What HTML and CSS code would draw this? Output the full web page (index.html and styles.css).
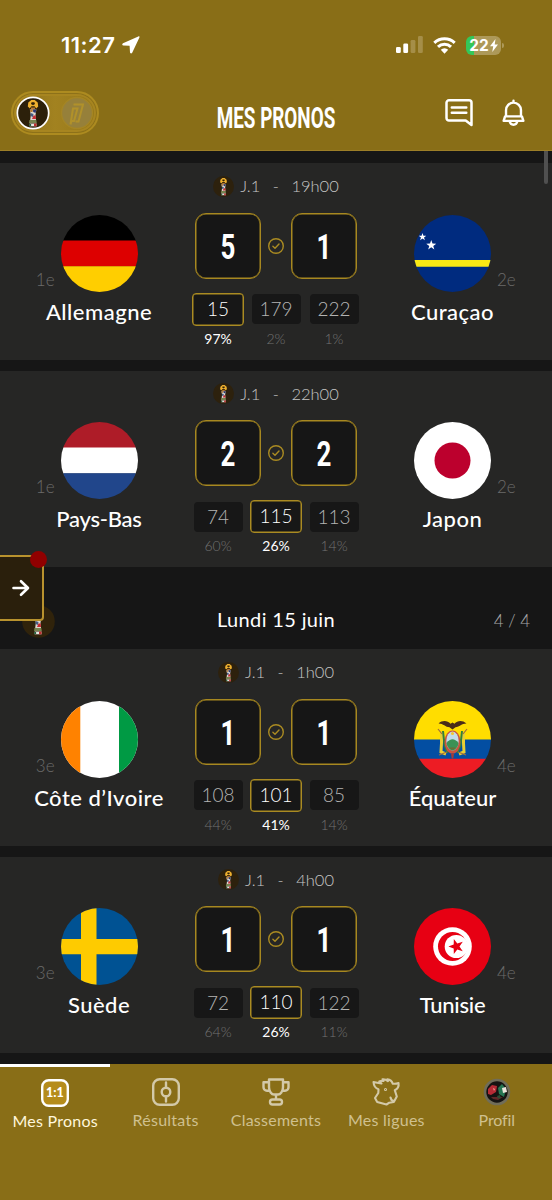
FILE: index.html
```html
<!DOCTYPE html>
<html lang="fr">
<head>
<meta charset="utf-8">
<title>Mes Pronos</title>
<link rel="stylesheet" href="styles.css">
</head>
<body>
<svg class="defs" aria-hidden="true">
  <symbol id="cup" viewBox="0 0 32 32">
    <path d="M14.300 3h3.400l3 2.600.5 4-2 1.800-1.600-2.200h-3.200l-1.600 2.200-2-1.800.5-4z" fill="#eeb02f"/>
    <path d="M14.600 5.200h2.800l.6 1.800-2 1.300-2-1.300z" fill="#30210a"/>
    <path d="M14 10.500h4v2h-4z" fill="#b97b35"/>
    <path d="M12.800 12.500h6.600l-.9 5.500.5 5h-5.800l.6-5z" fill="#dcd8d0"/>
    <path d="M13 12.500h3l-.5 2.500h-2.200z" fill="#b97b35"/>
    <path d="M16 12.500h3.200l-.5 3.500-2.500-1z" fill="#29366f"/>
    <path d="M13.700 16l2.800 1-.6 3-2.300-1z" fill="#455b83"/>
    <path d="M16.500 18.500h2.200l.3 3.500h-4z" fill="#c52b32"/>
    <path d="M12.500 23h6.800l.5 3h-7.800z" fill="#77834f"/>
    <path d="M12.600 26.500h7v2.800h-7z" fill="#e7e5e0"/>
    <path d="M17 26.500h2.600v2.800H17z" fill="#bd3030"/>
    <path d="M12.300 27h1.800v2h-1.800z" fill="#24633d"/>
  </symbol>
  <symbol id="ok" viewBox="0 0 16 16">
    <circle cx="8" cy="8" r="7.300" fill="none" stroke="#aa8b22" stroke-width="1.400"/>
    <path d="M4.900 8.300l2.100 2 4-4.300" fill="none" stroke="#aa8b22" stroke-width="1.400" stroke-linecap="round" stroke-linejoin="round"/>
  </symbol>
  <symbol id="star" viewBox="-10 -10 20 20">
    <path d="M0-10 2.350-3.240 9.510-3.090 3.800 1.240 5.880 8.090 0 4-5.880 8.090-3.800 1.240-9.510-3.090-2.350-3.240z"/>
  </symbol>
</svg>
<div class="phone">
  <header class="top">
    <div class="status">
      <div class="clock"><span class="time">11:27</span>
        <svg class="loc" viewBox="0 0 18 18"><path d="M16.300.4 1 7.300c-1.300.7-.9 2.100.4 2.200l6.200.3.400 6.500c.1 1.300 1.500 1.700 2.200.4L17.400 1.500c.4-.8-.3-1.500-1.100-1.100z" fill="#fff"/></svg>
      </div>
      <div class="signals">
        <svg class="bars" viewBox="0 0 27 18"><rect x="0" y="11" width="4.800" height="6" rx="1.300" fill="#fff"/><rect x="7.300" y="7.500" width="4.800" height="9.500" rx="1.300" fill="#fff"/><rect x="14.600" y="4" width="4.800" height="13" rx="1.300" fill="#a58e48"/><rect x="22" y="0" width="4.800" height="17" rx="1.300" fill="#a58e48"/></svg>
        <svg class="wifi" viewBox="0 0 23 17"><path d="M1.300 5.800a14.800 14.800 0 0 1 20.400 0M5 9.800a9.400 9.400 0 0 1 13 0" fill="none" stroke="#fff" stroke-width="3"/><path d="M11.500 16.700 7.800 12.800a5.300 5.300 0 0 1 7.400 0z" fill="#fff"/></svg>
        <div class="battery"><span>22</span><svg viewBox="0 0 8 13"><path d="M5.500 0 0 7.300h3.200L2.300 13 8 5.500H4.700z" fill="#fff"/></svg></div><i class="tip"></i>
      </div>
    </div>
    <div class="bar">
      <div class="switch">
        <svg class="sw-cup" viewBox="0 0 34 34"><circle cx="17" cy="17" r="15.700" fill="#2c200a" stroke="#fff" stroke-width="1.700"/><use href="#cup" x="1" y="1" width="32" height="32"/></svg>
        <svg class="sw-one" viewBox="0 0 34 34"><circle cx="17" cy="17" r="15.500" fill="#96803a" stroke="#a58523" stroke-width="1.300"/><path d="M13.500 8.500h9.500l-4.500 17h-3M10.500 28.500l1-3.500h2.500l3.500-12.500h-4.500z" fill="none" stroke="#b1912a" stroke-width="2"/></svg>
      </div>
      <h1>MES PRONOS</h1>
      <div class="actions">
        <svg class="chat" viewBox="0 0 28 28"><path d="M4 1.300h20a2.500 2.500 0 0 1 2.500 2.500V26l-5.800-4.500H4A2.500 2.500 0 0 1 1.500 19V3.800A2.500 2.500 0 0 1 4 1.300zM6.800 8.500h14.500M6.800 13.700h14.500" fill="none" stroke="#fff" stroke-width="2.500" stroke-linecap="round" stroke-linejoin="round"/></svg>
        <svg class="bell" viewBox="0 0 24 28"><path d="M12 1.200v2M4.200 17.500V11a7.800 7.800 0 0 1 15.600 0v6.500M3.200 17.500h17.600l1.500 4.700H1.700zM8 22.500c.4 2.500 1.900 3.800 4 3.800s3.600-1.300 4-3.800" fill="none" stroke="#fff" stroke-width="2.500" stroke-linecap="round" stroke-linejoin="round"/></svg>
      </div>
    </div>
  </header>

  <main class="feed">
    <i class="scroll"></i>
    <article class="match">
      <div class="team home"><div class="crest"><span class="rank">1e</span>
        <svg class="flag" viewBox="0 0 77 77"><path d="M0 0h77v26H0z" fill="#000"/><path d="M0 25.500h77v26H0z" fill="#dd0000"/><path d="M0 51.300h77V77H0z" fill="#ffce00"/></svg></div>
        <span class="name wide">Allemagne</span></div>
      <div class="centre">
        <div class="when"><svg><use href="#cup"/></svg><span>J.1</span><span class="dash">-</span><span>19h00</span></div>
        <div class="scores"><b><span>5</span></b><svg><use href="#ok"/></svg><b><span>1</span></b></div>
        <div class="odds"><div class="odd on"><em>15</em><small>97%</small></div><div class="odd"><em>179</em><small>2%</small></div><div class="odd"><em>222</em><small>1%</small></div></div>
      </div>
      <div class="team away"><div class="crest"><span class="rank">2e</span>
        <svg class="flag" viewBox="0 0 77 77"><path d="M0 0h77v77H0z" fill="#002b7f"/><path d="M0 45h77v6.700H0z" fill="#f9e814"/><g fill="#fff"><use href="#star" x="4.500" y="18" width="8" height="8"/><use href="#star" x="12" y="25" width="10.500" height="10.500"/></g></svg></div>
        <span class="name wide">Curaçao</span></div>
    </article>
    <article class="match">
      <div class="team home"><div class="crest"><span class="rank">1e</span>
        <svg class="flag" viewBox="0 0 77 77"><path d="M0 0h77v26H0z" fill="#ae1c28"/><path d="M0 25.500h77v26H0z" fill="#fff"/><path d="M0 51.300h77V77H0z" fill="#21468b"/></svg></div>
        <span class="name tight">Pays-Bas</span></div>
      <div class="centre">
        <div class="when"><svg><use href="#cup"/></svg><span>J.1</span><span class="dash">-</span><span>22h00</span></div>
        <div class="scores"><b><span>2</span></b><svg><use href="#ok"/></svg><b><span>2</span></b></div>
        <div class="odds"><div class="odd"><em>74</em><small>60%</small></div><div class="odd on"><em>115</em><small>26%</small></div><div class="odd"><em>113</em><small>14%</small></div></div>
      </div>
      <div class="team away"><div class="crest"><span class="rank">2e</span>
        <svg class="flag" viewBox="0 0 77 77"><path d="M0 0h77v77H0z" fill="#fff"/><circle cx="38.500" cy="38.500" r="18" fill="#bc002d"/></svg></div>
        <span class="name wide">Japon</span></div>
    </article>

    <section class="day">
      <svg class="day-cup" viewBox="0 0 33 33"><circle cx="16.500" cy="16.500" r="16.300" fill="#30230b"/><use href="#cup" x="0" y="0" width="32" height="32"/></svg>
      <h2>Lundi 15 juin</h2>
      <span class="count">4 / 4</span>
      <div class="drawer"><svg viewBox="0 0 18 18"><path d="M1.500 9h14M9 2.200 16 9l-7 6.800" fill="none" stroke="#fff" stroke-width="2.600" stroke-linecap="round" stroke-linejoin="round"/></svg><i></i></div>
    </section>

    <article class="match">
      <div class="team home"><div class="crest"><span class="rank">3e</span>
        <svg class="flag" viewBox="0 0 77 77"><path d="M0 0h77v77H0z" fill="#fff"/><path d="M0 0h19.300v77H0z" fill="#ff8200"/><path d="M58 0h19v77H58z" fill="#009a44"/></svg></div>
        <span class="name wide">Côte d’Ivoire</span></div>
      <div class="centre">
        <div class="when"><svg><use href="#cup"/></svg><span>J.1</span><span class="dash">-</span><span>1h00</span></div>
        <div class="scores"><b><span>1</span></b><svg><use href="#ok"/></svg><b><span>1</span></b></div>
        <div class="odds"><div class="odd"><em>108</em><small>44%</small></div><div class="odd on"><em>101</em><small>41%</small></div><div class="odd"><em>85</em><small>14%</small></div></div>
      </div>
      <div class="team away"><div class="crest"><span class="rank">4e</span>
        <svg class="flag" viewBox="0 0 77 77"><path d="M0 0h77v39H0z" fill="#ffdd00"/><path d="M0 38.500h77V58H0z" fill="#034ea2"/><path d="M0 57.700h77V77H0z" fill="#ed1c24"/>
          <path d="M27.500 31v11l-.5 9 5 2M49.500 31v11l.5 9-5 2" fill="none" stroke="#e9cf35" stroke-width="3"/>
          <path d="M29 30l1.500 14 3 8M48 30l-1.500 14-3 8" fill="none" stroke="#33803c" stroke-width="2"/>
          <path d="M24 28l4 5M53 28l-4 5M25 54l8-3M52 54l-8-3" stroke="#a06c3c" stroke-width="1.200"/>
          <path d="M24.500 22.500c4-3.500 9-3 12 .3l2-1.300 2 1.300c3-3.500 8-3.800 12-.3-4.500-.2-7 3.500-11 3.700L38.500 28.500l-3-2.300c-4 0-6.500-3.900-11-3.700z" fill="#4a2c18"/>
          <ellipse cx="38.500" cy="41" rx="8" ry="11.500" fill="#c9543f"/><ellipse cx="38.500" cy="40" rx="6.200" ry="9.500" fill="#c3dcea"/><path d="M32.500 42c4-5 8-5 12 0-.3 4-3 7-6 7.500-3-.5-5.500-3.500-6-7.500z" fill="#3b9155"/><path d="M35 46.500h7l-2 2h-3z" fill="#6b6d35"/><circle cx="38.500" cy="32.500" r="1.500" fill="#f4c430"/><path d="M37 52.500h3l-.7 5h-1.600z" fill="#a53b35"/></svg></div>
        <span class="name">Équateur</span></div>
    </article>
    <article class="match">
      <div class="team home"><div class="crest"><span class="rank">3e</span>
        <svg class="flag" viewBox="0 0 77 77"><path d="M0 0h77v77H0z" fill="#005293"/><path d="M20 0h15.500v77H20zM0 31h77v15.300H0z" fill="#fecb00"/></svg></div>
        <span class="name wide">Suède</span></div>
      <div class="centre">
        <div class="when"><svg><use href="#cup"/></svg><span>J.1</span><span class="dash">-</span><span>4h00</span></div>
        <div class="scores"><b><span>1</span></b><svg><use href="#ok"/></svg><b><span>1</span></b></div>
        <div class="odds"><div class="odd"><em>72</em><small>64%</small></div><div class="odd on"><em>110</em><small>26%</small></div><div class="odd"><em>122</em><small>11%</small></div></div>
      </div>
      <div class="team away"><div class="crest"><span class="rank">4e</span>
        <svg class="flag" viewBox="0 0 77 77"><path d="M0 0h77v77H0z" fill="#e70013"/><circle cx="38.500" cy="38.500" r="19.300" fill="#fff"/><circle cx="38.500" cy="38.500" r="14.500" fill="#e70013"/><circle cx="42.300" cy="38.500" r="11.600" fill="#fff"/><use href="#star" x="34.300" y="30.500" width="16" height="16" fill="#e70013" transform="rotate(-90 42.300 38.500)"/></svg></div>
        <span class="name tight">Tunisie</span></div>
    </article>
  </main>

  <nav class="tabs">
    <a class="tab active"><svg viewBox="0 0 28 28"><rect x="1.200" y="1.200" width="25.600" height="25.600" rx="6.500" fill="#b58c1b" stroke="#fff" stroke-width="2.400"/><text x="14" y="18.400" class="mini">1:1</text></svg><span>Mes Pronos</span></a>
    <a class="tab"><svg viewBox="0 0 28 28"><rect x="1.200" y="1.200" width="25.600" height="25.600" rx="6.500"/><circle cx="14" cy="14" r="4.300"/><path d="M14 4.500v5M14 18.500v5"/></svg><span>Résultats</span></a>
    <a class="tab"><svg viewBox="0 0 28 28"><path d="M7 1.500h14v7.700c0 4.200-2.700 7.300-5 7.300h-4c-2.300 0-5-3.100-5-7.300zM7 4.200H1.500v5c0 2 1.500 3.600 3.500 3.600h2.800M21 4.200h5.500v5c0 2-1.500 3.600-3.500 3.600h-2.800M14 16.500v5M10.500 21.500h7c1.500 0 2.500 1.200 2.500 2.500 0 1.500-1 2.500-2.500 2.500h-7c-1.500 0-2.500-1-2.500-2.500 0-1.300 1-2.500 2.500-2.500z"/></svg><span>Classements</span></a>
    <a class="tab"><svg class="cow" viewBox="0 0 28 28"><path d="M9.500 5.500C6 5 3.500 4.500 1.500 4c.3 3.800 1.500 6.300 5 7.200L6.300 15l-3.300 5 2.200 4 9.300 2.500 2.800-1.800 4.500-.7 3-5.500-2-6.300c2.700-1.200 4.200-4 3.700-7.200-1.800.7-4 1-5.800.6-.8-2.500-2.700-3.900-5.400-4.300l.7 1.800C14.300 1.700 12.500 1.100 10.500 1.300l1 1.700C10 2.700 8.500 2.900 7.300 3.500zM18.500 19.500l1 2.500 2 1"/><circle cx="13.500" cy="11.500" r=".5"/></svg><span>Mes ligues</span></a>
    <a class="tab last"><svg viewBox="0 0 28 28"><circle cx="14" cy="14" r="12" fill="#151312" stroke="#706d59" stroke-width="2.600"/><path class="pf" d="M5 11l4-4 5 1-1 6-5 3-3-1z" fill="#b52a35"/><path class="pf" d="M15 10l4-4 4 5-2 8-5-3z" fill="#267653"/><path class="pf" d="M19 10l4-1 1 5-4 1z" fill="#ece5dc"/><path class="pf" d="M10 10l2 1-1 2z" fill="#eba49c"/><path class="pf" d="M8 19h12l-5 3-5-1z" fill="#602627"/><path class="pf" d="M14 18l3-1 1 3-3 .5z" fill="#294e34"/></svg><span>Profil</span></a>
  </nav>
</div>
</body>
</html>
```
FILE: styles.css
```css
* { box-sizing: border-box; }
body { margin: 0; background: #161616; font-family: Lato, "Open Sans", sans-serif; color: #fff; }
.defs { position: absolute; width: 0; height: 0; }
svg { display: block; flex: none; overflow: visible; }
i, em { font-style: normal; }
.phone { width: 552px; height: 1200px; overflow: hidden; display: flex; flex-direction: column; background: #161616; }

.top { height: 151px; background: #896e17; border-bottom: 1px solid #9c7e27; flex: none; }
.status { height: 90px; padding: 35px 48px 0 61px; display: flex; justify-content: space-between; align-items: flex-start; }
.clock { display: flex; align-items: center; gap: 5px; height: 20px; }
.time { font: 600 22px/20px Inter, sans-serif; width: 56px; white-space: nowrap; letter-spacing: .45px; }
.loc { width: 18px; height: 18px; }
.signals { display: flex; align-items: center; height: 20px; }
.bars { width: 27px; height: 18px; margin-right: 10px; }
.wifi { width: 23px; height: 17px; margin-right: 10px; }
.battery { width: 35px; height: 19px; border-radius: 6px; background: linear-gradient(90deg, #34c759 8px, #ad9959 8px); display: flex; align-items: center; justify-content: center; gap: 1px; }
.battery span { font: 700 15.5px/19px Inter, sans-serif; }
.battery svg { width: 8px; height: 13px; }
.tip { width: 2px; height: 5px; margin-left: 1px; border-radius: 0 2px 2px 0; background: #ad9959; }
.bar { padding: 0 11px; display: grid; grid-template-columns: 1fr 118px 1fr; align-items: center; height: 46px; }
.switch { width: 88px; height: 44px; border-radius: 22px; border: 2px solid #ad8b20; box-shadow: inset 0 0 0 1px #8d7119, inset 0 0 0 3px #a78520; background: linear-gradient(90deg, #8c7018, #a28220 50%, #967819); display: flex; align-items: center; justify-content: space-between; padding: 0 3px; }
.switch svg { width: 34px; height: 34px; }
h1 { margin: 10px 0 0; font: 700 29px/28px Roboto, sans-serif; white-space: nowrap; display: flex; justify-content: center; transform: scaleX(.65); }
.actions { display: flex; justify-content: flex-end; align-items: center; gap: 29px; margin-right: 16px; }
.chat { width: 28px; height: 28px; }
.bell { width: 23px; height: 28px; }

.feed { height: 913px; padding-top: 12.400px; position: relative; flex: none; }
.scroll { position: absolute; right: 4px; top: 0; width: 4px; height: 33px; border-radius: 0 0 2px 2px; background: #505050; }
.match { height: 196.400px; margin-bottom: 11px; background: #262625; display: grid; grid-template-columns: 193px 166px 193px; }
.team { padding-top: 51.500px; display: flex; flex-direction: column; align-items: center; }
.home { padding-left: 5px; }
.away { padding-right: 6px; }
.crest { position: relative; }
.flag { width: 77px; height: 77px; border-radius: 50%; overflow: hidden; }
.rank { position: absolute; top: 54px; font-size: 17px; line-height: 22px; color: #6b6b6a; font-weight: 300; }
.home .rank { right: 83px; }
.away .rank { left: 83px; }
.name { font-size: 22px; line-height: 28px; margin-top: 6px; font-weight: 500; white-space: nowrap; }
.name.wide { letter-spacing: .5px; }
.name.tight { letter-spacing: -.25px; }
.centre { padding-top: 12px; }
.when { height: 22px; display: flex; align-items: center; justify-content: center; font-size: 16.500px; line-height: 22px; color: #c6c6c5; font-weight: 300; }
.when svg { width: 21px; height: 21px; border-radius: 50%; background: #2d210d; margin-right: 6px; }
.when .dash { margin: 0 12.500px; }
.scores { margin-top: 15.500px; padding: 0 2px; display: flex; align-items: center; justify-content: space-between; }
.scores b { width: 66px; height: 66px; border: 1.500px solid #a78820; border-radius: 11px; background: #161616; display: flex; align-items: center; justify-content: center; font: 700 35px/38px Roboto, sans-serif; box-shadow: inset 0 0 0 .5px #a78820; }
.scores b span { transform: translateY(2px) scaleX(.74); }
.scores svg { width: 16px; height: 16px; }
.odds { display: grid; grid-template-columns: 50px 50px 50px; justify-content: space-between; margin-top: 14px; }
.odd { display: flex; flex-direction: column; align-items: center; }
.odd em { width: 49px; height: 30px; margin: 1.500px 0; border-radius: 4px; background: #171717; font-size: 19px; line-height: 29px; text-align: center; color: #b4b4b3; font-weight: 300; }
.odd small { font-size: 14px; line-height: 18px; margin-top: 4px; color: #727271; font-weight: 300; }
.odd.on em { width: 52px; height: 33px; margin: 0; line-height: 29px; border: 1.500px solid #aa8b22; box-shadow: inset 0 0 0 .5px #aa8b22; color: #fff; }
.odd.on small { color: #fff; font-weight: 400; }

.day { height: 82px; margin-top: -11px; position: relative; padding: 25px 22px 0; display: grid; grid-template-columns: 1fr auto 1fr; align-items: center; }
.day-cup { width: 33px; height: 33px; transform: translateY(1px); }
h2 { margin: -3px 0 0; font-size: 20px; line-height: 28px; font-weight: 400; white-space: nowrap; letter-spacing: .35px; }
.count { text-align: right; font-size: 17px; color: #a6a6a6; font-weight: 300; }
.drawer { position: absolute; left: 0; top: -12px; width: 44px; height: 66px; background: #2a1f0c; border: 2.500px solid #b8922e; border-left: 0; border-radius: 0 4px 4px 0; display: flex; align-items: center; padding-left: 12px; }
.drawer svg { width: 18px; height: 18px; }
.drawer i { position: absolute; width: 17px; height: 17px; border-radius: 50%; background: #900000; right: -5px; top: -6px; }

.tabs { flex: 1; background: #896e17; display: grid; grid-template-columns: repeat(5, 1fr); }
.tab { display: flex; flex-direction: column; align-items: center; color: #cfc08f; font-size: 16px; line-height: 22px; letter-spacing: .25px; border-top: 3px solid transparent; padding-top: 11px; white-space: nowrap; }
.tab svg { width: 28px; height: 28px; fill: none; stroke: #d3c9a8; stroke-width: 2.400; stroke-linejoin: round; stroke-linecap: round; margin-bottom: 3px; }
.tab .cow { stroke-width: 2.100; }
.tab .pf { stroke: none; }
.tab.last { letter-spacing: -.1px; }
.tab.active { border-top-color: #fff; color: #fff7dc; padding-top: 12px; }
.mini { font: 900 12.500px Lato, sans-serif; fill: #fff; stroke: none; text-anchor: middle; letter-spacing: 0; }
```
